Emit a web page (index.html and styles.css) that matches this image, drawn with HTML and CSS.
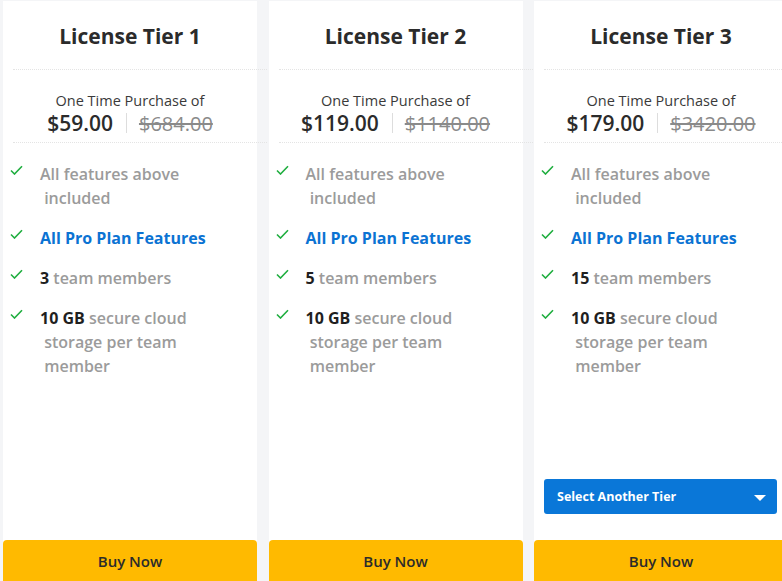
FILE: index.html
```html
<!DOCTYPE html>
<html lang="en">

<head>
    <meta charset="UTF-8">
    <meta name="viewport" content="width=device-width, initial-scale=1.0">
    <title>License Tiers</title>
    <link rel="stylesheet" href="styles.css">
</head>

<body>
    <div class="tiers">
        <div class="tier">
            <h2 class="tier-title">License Tier 1</h2>
            <div class="divider"></div>
            <div class="price-box">
                <p class="price-label">One Time Purchase of</p>
                <div class="price-row">
                    <span class="price">$59.00</span>
                    <span class="old-price">$684.00</span>
                </div>
            </div>
            <div class="divider"></div>
            <ul class="features">
                <li><svg class="check" viewBox="0 0 13 10"><polyline points="1,5.5 4.5,9 12,1.2"/></svg><span class="feature-text">All features above<br>&nbsp;included</span></li>
                <li><svg class="check" viewBox="0 0 13 10"><polyline points="1,5.5 4.5,9 12,1.2"/></svg><span class="feature-text pro">All Pro Plan Features</span></li>
                <li><svg class="check" viewBox="0 0 13 10"><polyline points="1,5.5 4.5,9 12,1.2"/></svg><span class="feature-text"><b>3</b> team members</span></li>
                <li><svg class="check" viewBox="0 0 13 10"><polyline points="1,5.5 4.5,9 12,1.2"/></svg><span class="feature-text"><b>10 GB</b> secure cloud<br>&nbsp;storage per team<br>&nbsp;member</span></li>
            </ul>
            <button class="buy">Buy Now</button>
        </div>

        <div class="tier">
            <h2 class="tier-title">License Tier 2</h2>
            <div class="divider"></div>
            <div class="price-box">
                <p class="price-label">One Time Purchase of</p>
                <div class="price-row">
                    <span class="price">$119.00</span>
                    <span class="old-price">$1140.00</span>
                </div>
            </div>
            <div class="divider"></div>
            <ul class="features">
                <li><svg class="check" viewBox="0 0 13 10"><polyline points="1,5.5 4.5,9 12,1.2"/></svg><span class="feature-text">All features above<br>&nbsp;included</span></li>
                <li><svg class="check" viewBox="0 0 13 10"><polyline points="1,5.5 4.5,9 12,1.2"/></svg><span class="feature-text pro">All Pro Plan Features</span></li>
                <li><svg class="check" viewBox="0 0 13 10"><polyline points="1,5.5 4.5,9 12,1.2"/></svg><span class="feature-text"><b>5</b> team members</span></li>
                <li><svg class="check" viewBox="0 0 13 10"><polyline points="1,5.5 4.5,9 12,1.2"/></svg><span class="feature-text"><b>10 GB</b> secure cloud<br>&nbsp;storage per team<br>&nbsp;member</span></li>
            </ul>
            <button class="buy">Buy Now</button>
        </div>

        <div class="tier">
            <h2 class="tier-title">License Tier 3</h2>
            <div class="divider"></div>
            <div class="price-box">
                <p class="price-label">One Time Purchase of</p>
                <div class="price-row">
                    <span class="price">$179.00</span>
                    <span class="old-price">$3420.00</span>
                </div>
            </div>
            <div class="divider"></div>
            <ul class="features">
                <li><svg class="check" viewBox="0 0 13 10"><polyline points="1,5.5 4.5,9 12,1.2"/></svg><span class="feature-text">All features above<br>&nbsp;included</span></li>
                <li><svg class="check" viewBox="0 0 13 10"><polyline points="1,5.5 4.5,9 12,1.2"/></svg><span class="feature-text pro">All Pro Plan Features</span></li>
                <li><svg class="check" viewBox="0 0 13 10"><polyline points="1,5.5 4.5,9 12,1.2"/></svg><span class="feature-text"><b>15</b> team members</span></li>
                <li><svg class="check" viewBox="0 0 13 10"><polyline points="1,5.5 4.5,9 12,1.2"/></svg><span class="feature-text"><b>10 GB</b> secure cloud<br>&nbsp;storage per team<br>&nbsp;member</span></li>
            </ul>
            <div class="tier-select">
                <span>Select Another Tier</span>
                <span class="caret"></span>
            </div>
            <button class="buy">Buy Now</button>
        </div>
    </div>
</body>

</html>
```

FILE: styles.css
```css
/* Reset and base styling */
* {
    margin: 0;
    padding: 0;
    box-sizing: border-box;
}

body {
    font-family: 'Open Sans', 'Noto Sans', sans-serif;
    background: #f4f5f7;
    height: 100vh;
    overflow: hidden;
}

/* Tier columns */
.tiers {
    display: flex;
    gap: 11.5px;
    padding: 1px 0 0 3px;
    height: 100%;
}

.tier {
    flex: 0 0 254px;
    background: #ffffff;
    display: flex;
    flex-direction: column;
}

.tier-title {
    height: 68px;
    line-height: 70px;
    text-align: center;
    font-size: 21px;
    font-weight: 700;
    color: #2b2b2b;
}

.divider {
    height: 1px;
    margin: 0 -10px 0 10px;
    border-top: 1px dotted #e4e4e4;
}

/* Price */
.price-box {
    height: 72px;
    padding-top: 21px;
    text-align: center;
}

.price-label {
    font-size: 14.5px;
    line-height: 20px;
    color: #3a3a3a;
}

.price-row {
    display: flex;
    justify-content: center;
    align-items: center;
    height: 24px;
}

.price {
    font-size: 21px;
    font-weight: 600;
    color: #2b2b2b;
    padding-right: 13px;
    border-right: 1px solid #dddddd;
    line-height: 20px;
}

.old-price {
    font-size: 20px;
    color: #8a8a8a;
    text-decoration: line-through;
    padding-left: 12px;
}

/* Features */
.features {
    list-style: none;
    padding: 19px 0 0 7px;
}

.features li {
    display: flex;
    margin-bottom: 16px;
}

.check {
    width: 13px;
    height: 10px;
    margin: 3px 17px 0 0;
    flex-shrink: 0;
    fill: none;
    stroke: #1fae3f;
    stroke-width: 1.6;
}

.feature-text {
    font-size: 16px;
    line-height: 24px;
    font-weight: 600;
    color: #9b9b9b;
}

.feature-text b {
    color: #1f1f1f;
    font-weight: 700;
}

.feature-text.pro {
    color: #0b73d3;
    font-weight: 700;
}

/* Tier dropdown */
.tier-select {
    margin: auto 11px 26px 10px;
    height: 35px;
    background: #0a77d8;
    border-radius: 3px;
    color: #ffffff;
    font-size: 12.5px;
    font-weight: 700;
    display: flex;
    align-items: center;
    justify-content: space-between;
    padding: 0 11px 0 13px;
}

.caret {
    width: 0;
    height: 0;
    border-left: 6px solid transparent;
    border-right: 6px solid transparent;
    border-top: 6px solid #ffffff;
    margin-top: 3px;
}

/* Buy button */
.buy {
    margin-top: auto;
    height: 41px;
    background: #ffba00;
    border: none;
    border-radius: 4px 4px 0 0;
    font-family: inherit;
    font-size: 15px;
    font-weight: 600;
    color: #2b2b2b;
    cursor: pointer;
    flex-shrink: 0;
}

.tier-select + .buy {
    margin-top: 0;
}

.buy:hover {
    background-color: #f0ad00;
}
```
